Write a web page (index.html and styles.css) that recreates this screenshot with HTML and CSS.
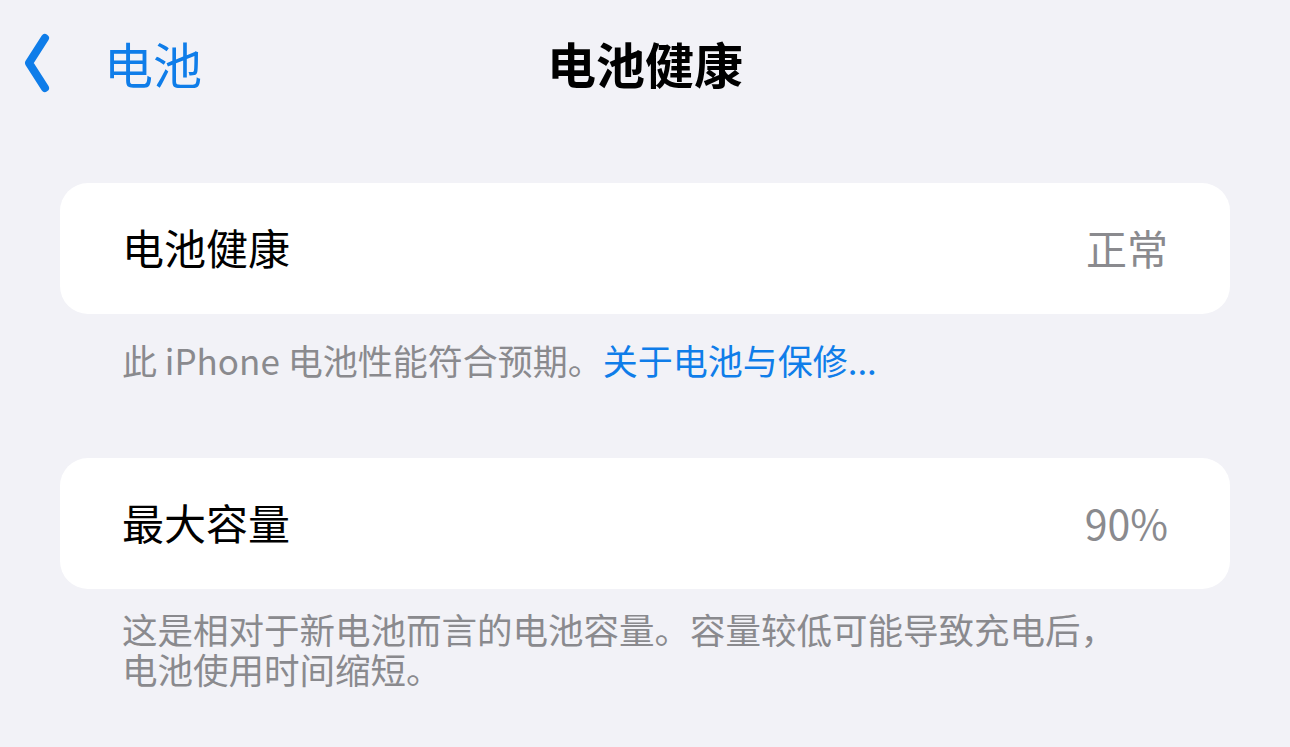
FILE: index.html
```html
<!DOCTYPE html>
<html lang="zh-CN">
<head>
  <meta charset="UTF-8">
  <meta name="viewport" content="width=device-width, initial-scale=1.0">
  <title>电池健康</title>
  <link rel="stylesheet" href="styles.css">
</head>
<body>
  <header class="navbar">
    <a class="back" href="#">
      <svg class="chevron" width="26" height="60" viewBox="0 0 26 60">
        <polyline points="21,5 5,30 21,55" fill="none" stroke="currentColor" stroke-width="8" stroke-linecap="round" stroke-linejoin="round"/>
      </svg>
      <span>电池</span>
    </a>
    <h1 class="title">电池健康</h1>
  </header>

  <main class="content">
    <section class="group">
      <div class="card">
        <span class="label">电池健康</span>
        <span class="value">正常</span>
      </div>
      <p class="footer first">此 iPhone 电池性能符合预期。<a href="#">关于电池与保修...</a></p>
    </section>

    <section class="group">
      <div class="card">
        <span class="label">最大容量</span>
        <span class="value">90%</span>
      </div>
      <p class="footer">这是相对于新电池而言的电池容量。容量较低可能导致充电后，<br>电池使用时间缩短。</p>
    </section>
  </main>
</body>
</html>
```

FILE: styles.css
```css
body {
  margin: 0;
  padding: 0;
  background-color: #f2f2f7;
  font-family: "Noto Sans CJK SC", "Noto Sans", sans-serif;
  color: #000;
}

.navbar {
  position: relative;
  height: 126px;
  display: flex;
  align-items: center;
  justify-content: center;
}

.back {
  position: absolute;
  left: 24px;
  top: 33px;
  display: flex;
  align-items: center;
  gap: 54px;
  color: #0f7de9;
  text-decoration: none;
  font-size: 49px;
  line-height: 60px;
}

.chevron {
  display: block;
}

.title {
  margin: 0;
  font-size: 49px;
  font-weight: 700;
  line-height: 58px;
}

.content {
  padding: 57px 60px 0;
}

.group {
  margin-bottom: 78px;
}

.card {
  display: flex;
  align-items: center;
  justify-content: space-between;
  height: 131px;
  padding: 0 62px;
  background-color: #fff;
  border-radius: 28px;
}

.label {
  font-size: 42px;
  padding-bottom: 4px;
}

.value {
  font-size: 41px;
  color: #8a8a8e;
  padding-bottom: 4px;
}

.footer {
  margin: 0;
  padding: 20px 62px 0;
  font-size: 35.5px;
  line-height: 40px;
  color: #8a8a8e;
}

.footer.first {
  padding-top: 26px;
  font-size: 35px;
}

.footer a {
  color: #0f7de9;
  text-decoration: none;
}
```
